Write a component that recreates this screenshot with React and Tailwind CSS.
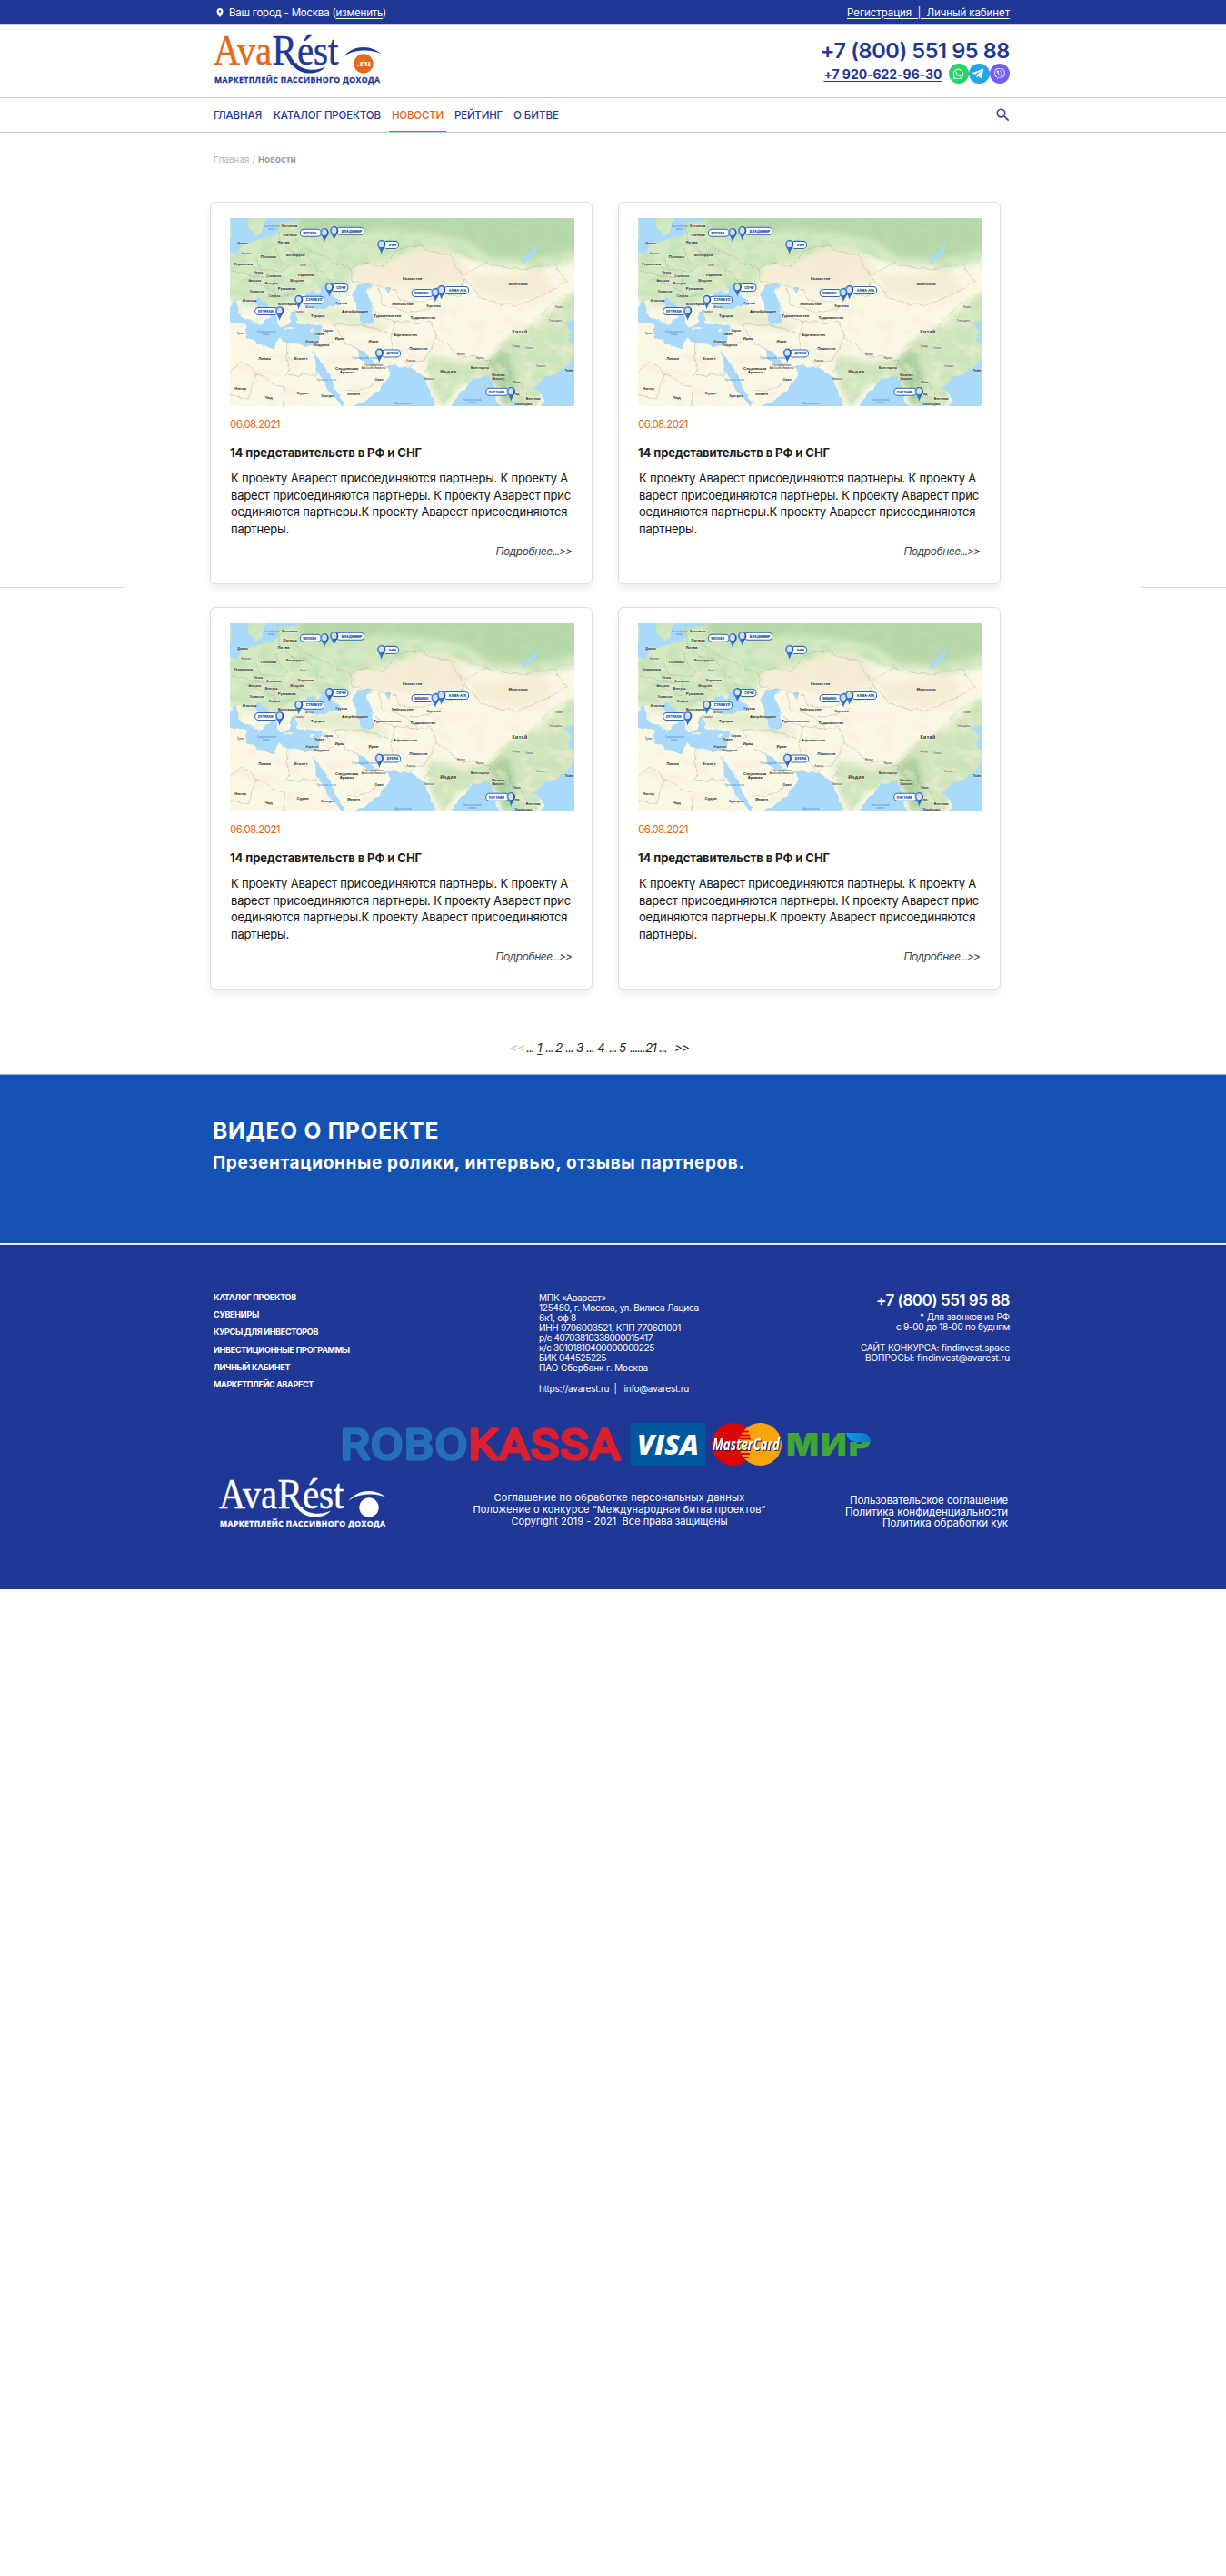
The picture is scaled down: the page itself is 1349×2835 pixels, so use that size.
import React from "react";
import { FaWhatsapp, FaTelegramPlane, FaViber } from "react-icons/fa";
import { MdSearch, MdPlace } from "react-icons/md";

const PINS = [
  [411, 139, 331, 69, "МОСКВА"],
  [443, 133, 450, 92, "ВЛАДИМИР"],
  [599, 178, 605, 51, "УФА"],
  [427, 319, 433, 56, "СОЧИ"],
  [326, 360, 333, 77, "СТАМБУЛ"],
  [263, 397, 182, 75, "ЛУТРАКИ"],
  [777, 337, 699, 71, "БИШКЕК"],
  [797, 328, 804, 83, "АЛМА-АТА"],
  [592, 536, 598, 64, "ДУБАЙ"],
  [1027, 663, 944, 76, "ПАТТАЙЯ"],
];
const PLACES = [
  [295, 121, "Эстония"], [297, 152, "Латвия"], [276, 176, "Литва"], [316, 217, "Беларусь"], [226, 222, "Польша"],
  [143, 248, "Германия"], [141, 177, "Дания", 11], [193, 274, "Чехия", 10], [243, 286, "Словакия", 10], [181, 302, "Австрия", 10],
  [236, 311, "Венгрия", 10], [349, 282, "Украина"], [320, 302, "Молдова", 10], [287, 328, "Румыния"], [188, 338, "Хорватия", 10],
  [246, 352, "Сербия", 10], [164, 366, "Италия"], [289, 380, "Болгария"], [467, 377, "Грузия", 11], [389, 418, "Турция"],
  [511, 402, "Азербайджан"], [422, 464, "Сирия", 10], [462, 491, "Ирак"], [573, 501, "Иран"], [394, 476, "Ливан", 10],
  [370, 502, "Израиль", 10], [402, 513, "Иордания", 10], [134, 474, "Тунис", 9], [213, 558, "Ливия"], [334, 557, "Египет"],
  [134, 657, "Нигер"], [227, 686, "Чад"], [339, 671, "Судан"], [422, 681, "Эритрея", 11], [507, 676, "Йемен"], [591, 627, "Оман", 10],
  [485, 590, "Саудовская"], [485, 602, "Аравия"], [573, 580, "Объединённые", 9], [573, 589, "Арабские Эмираты", 9],
  [701, 294, "Казахстан"], [668, 380, "Узбекистан"], [619, 418, "Туркменистан"], [736, 424, "Таджикистан"], [771, 386, "Киргизия", 10],
  [678, 481, "Афганистан"], [721, 525, "Пакистан"], [820, 603, "Индия", 15], [1050, 313, "Монголия"], [1056, 472, "Китай", 15],
  [862, 544, "Непал", 9], [925, 554, "Бутан", 9], [924, 588, "Бангладеш", 11], [985, 613, "Мьянма", 11], [985, 624, "(Бирма)", 11],
  [1045, 637, "Лаос", 11], [1100, 689, "Вьетнам", 11], [1068, 707, "Камбоджа", 11], [1218, 596, "Тайв", 11],
  [1047, 674, "нд", 11], [697, 565, "Карачи", 9], [755, 625, "Мумбаи", 9], [340, 249, "Киев", 9],
  [153, 210, "Берлин", 9], [1184, 388, "Пекин", 9], [1043, 515, "Чэнду", 9], [1087, 522, "Ухань", 9], [1173, 432, "Тяньцзинь", 9],
  [1126, 582, "Гонконг", 9], [364, 389, "Анкара", 9], [327, 404, "Стамбул", 9],
];
const WATERS = [
  [237, 120, "Балтийское"], [237, 129, "море"], [219, 467, "Средиземное"], [219, 476, "море"], [544, 556, "Персидский залив"],
  [419, 628, "Красное море"], [671, 706, "Аравийское"], [899, 693, "Бенгальский"], [899, 702, "залив"],
];

function WorldMap() {
  return (
    <svg viewBox="99 91 1137 620" preserveAspectRatio="none" className="block h-[207px] w-[379px]">
      <defs>
        <filter id="soft" x="-20%" y="-20%" width="140%" height="140%"><feGaussianBlur stdDeviation="11" /></filter>
        <filter id="rough" x="-5%" y="-5%" width="110%" height="110%">
          <feTurbulence type="fractalNoise" baseFrequency="0.03" numOctaves="4" seed="4" result="n" />
          <feDisplacementMap in="SourceGraphic" in2="n" scale="20" xChannelSelector="R" yChannelSelector="G" />
        </filter>
        <filter id="relief" x="0" y="0" width="100%" height="100%">
          <feTurbulence type="fractalNoise" baseFrequency="0.02 0.028" numOctaves="5" seed="9" />
          <feColorMatrix values="0 0 0 0 .5  0 0 0 0 .73  0 0 0 0 .45  0 5 0 0 -2.3" />
        </filter>
        <filter id="sand" x="0" y="0" width="100%" height="100%">
          <feTurbulence type="fractalNoise" baseFrequency="0.018 0.026" numOctaves="5" seed="21" />
          <feColorMatrix values="0 0 0 0 .91  0 0 0 0 .86  0 0 0 0 .7  0 5 0 0 -2.5" />
        </filter>
        <linearGradient id="pin" x1="0" x2="1"><stop offset="0" stopColor="#4b93e6" /><stop offset="1" stopColor="#1550a8" /></linearGradient>
        <clipPath id="north"><path d="M99 91H1236V240L1130 255L1000 240L900 230L800 180L700 190L610 240L500 250L480 330L450 350L340 330L240 380L99 350Z" /></clipPath>
        <clipPath id="southeast"><path d="M750 560L860 570L960 560L990 500L1090 440L1180 350L1236 330V620L1130 640L1110 711H1010L960 620L860 640L800 711L760 640Z" /></clipPath>
      </defs>
      <rect x="99" y="91" width="1137" height="620" fill="#fcf8e6" />
      <g filter="url(#soft)">
        <path fill="#d3e8c0" d="M80 70H1260V230L1110 260L960 245L850 215L720 190L620 235L520 250L480 340L350 340L250 395L90 365Z" />
        <path fill="#b7d8a9" d="M320 70H1260V190L1100 225L960 220L880 165L760 140L600 125L500 150L420 130L330 150Z" />
        <path fill="#f4ecd2" d="M500 260L640 230L720 190L830 200L890 270L870 310L700 320L520 310Z" />
        <path fill="#f4ecd2" d="M900 290L1130 260L1170 330L1050 370L920 340Z" />
        <path fill="#d2e6be" d="M750 540L860 560L960 560L1000 500L1110 440L1200 360L1250 330V600L1130 640L1120 711H1000L960 620L860 640L800 720L760 640Z" />
        <path fill="#add29e" d="M950 560L1010 520L1040 600L1030 711H1000Z" />
        <path fill="#e3edcb" d="M300 395L440 380L620 440L600 470L460 440L330 430Z" />
      </g>
      <rect x="99" y="240" width="1137" height="471" filter="url(#sand)" opacity=".45" />
      <g clipPath="url(#north)"><rect x="99" y="91" width="1137" height="300" filter="url(#relief)" opacity=".5" /></g>
      <g clipPath="url(#southeast)"><rect x="740" y="320" width="500" height="391" filter="url(#relief)" opacity=".4" /></g>
      <g filter="url(#rough)" fill="#a9d9fb">
        <path d="M320 80L318 100L255 104L262 130L240 152L205 158L150 172L118 206L90 200V165L108 150L95 80H158L166 128L180 150L204 140L208 112L230 80Z" />
        <path d="M344 352C352 325 375 330 388 342L402 330L395 318L425 312L440 352L470 372C455 390 400 390 345 383Z" />
        <path d="M508 335C515 305 552 300 572 318L550 335C560 360 576 380 566 400L575 430C560 450 530 445 527 425C530 390 505 370 508 335Z" />
        <path d="M90 385L128 360L134 410L165 425L200 440L236 415L170 362L190 350L215 372L248 408L262 445L296 440L302 396L322 400L318 436L345 446L402 444L392 504L352 516L296 502L256 488L244 524L196 506L152 482L150 440L90 434Z" />
        <path d="M368 528L395 560L430 612L450 660L474 700L470 711L442 684L415 642L388 588Z" />
        <path d="M517 520L544 532L562 552L596 570L578 582L548 575L524 550Z" />
        <path d="M474 725L524 704L590 665L630 607L622 590L606 576L692 578L718 596L745 620L757 652L782 725Z" />
        <path d="M832 725L838 690L872 650L902 622L958 612L978 666L990 725Z" />
        <path d="M1125 725L1136 688L1106 650L1130 622L1180 604L1220 566L1256 520V725ZM1030 700L1050 690L1062 725H1032Z" />
        <path d="M1256 420L1202 438L1226 470L1215 500L1256 520Z" />
        <path d="M1058 234L1090 206L1118 162L1108 208L1068 240Z" />
        <path d="M770 318L800 312L812 322L782 326ZM612 322L630 318L628 345ZM342 512L356 508L350 520Z" />
      </g>
      <g fill="#f2f0d6" filter="url(#rough)">
        <path d="M124 366L136 362L136 408L124 404ZM165 430L196 426L192 444ZM276 452L304 455L304 461L276 458ZM356 462L378 456L370 468Z" />
      </g>
      <g filter="url(#rough)" fill="none" stroke="#a39f90" strokeWidth="1.6" opacity=".75">
        <path d="M498 260L530 240L610 248L650 195L720 180L760 200L820 210L870 280L930 240L1000 250L1080 260L1170 240L1210 300L1120 350L1040 385L930 355L870 290" />
        <path d="M498 260L505 300L570 312L640 325L660 360L720 370L790 350L860 345L870 290" />
        <path d="M590 320L600 375L680 400L720 440L640 430L570 400M690 400L760 390L800 370M720 440L760 430L780 480L740 560L690 575M640 430L630 520L690 575M780 480L850 540L960 560L1010 510" />
        <path d="M290 500V608L390 606M186 605L278 655V711M99 600L140 560L190 605L160 690M99 675L160 690M440 440L480 500L520 520M395 510L440 498M470 660L540 655L600 620M440 445L530 440L620 470" />
        <path d="M260 100L262 160L300 200L350 210L430 300M180 220L200 260L280 265L300 240M240 270L250 350L310 340M99 265L150 275L230 290M290 300L350 310M250 190L270 240M150 290L240 330M310 165L350 190L470 250L498 260" />
        <path d="M960 560L950 600M1010 540L1030 620L1060 640L1080 680M1030 620L1000 640M740 600L755 580" />
      </g>
      <g fontFamily="Liberation Sans, sans-serif" textAnchor="middle" fill="#1b1d22" stroke="#fffdf2" strokeWidth="1" paintOrder="stroke">
        {PLACES.map(([x, y, t, s]) => (
          <text key={t + x + y} x={x} y={y} fontSize={s || 13} fontWeight={s && s < 10 ? 400 : 700} letterSpacing={s === 15 ? 1.5 : 0}>{t}</text>
        ))}
      </g>
      <g fontFamily="Liberation Sans, sans-serif" textAnchor="middle" fill="#4f8fd0" fontSize="10">
        {WATERS.map(([x, y, t]) => <text key={t + y} x={x} y={y}>{t}</text>)}
      </g>
      {PINS.map(([cx, cy, x, w, name]) => {
        const left = x < cx - 20;
        return (
          <g key={name}>
            <rect x={x} y={cy - 11} width={w} height="24" rx="12" fill="#fff" stroke="#2a68b8" strokeWidth="3" />
            <text x={left ? x + w / 2 - 3 : x + w / 2 + 5} y={cy + 5} textAnchor="middle" fontFamily="Inter, sans-serif" fontWeight="900" fontSize="11" textLength={w - 25} lengthAdjust="spacingAndGlyphs" fill="#164f9f">{name}</text>
            <path d={`M${cx - 14} ${cy}a14 15 0 0 1 28 0c0 9 -10 14 -14 32c-4 -18 -14 -23 -14 -32Z`} fill="url(#pin)" />
            <ellipse cx={cx} cy={cy - 1} rx="8.500" ry="10" fill="#dcdde0" />
          </g>
        );
      })}
    </svg>
  );
}

function Logo({ footer }) {
  const main = footer ? "#ffffff" : "#1f3795";
  const accent = footer ? "#ffffff" : "#e5691a";
  return (
    <svg viewBox="0 0 185 56" className="block h-[56px] w-[185px] shrink-0 overflow-visible">
      <g fontFamily="Liberation Serif, serif" fontSize="47">
        <text x="0" y="33" textLength="64" lengthAdjust="spacingAndGlyphs" fill={accent} stroke={accent} strokeWidth=".5">Ava</text>
        <text x="64.500" y="33" textLength="73" lengthAdjust="spacingAndGlyphs" fill={main} stroke={main} strokeWidth=".5">Rést</text>
      </g>
      <path d="M82 20C86 29 92 36 103 38.300C111 39.800 118 38 123 35.500C119 40.500 112 43 104 42.500C92 42 84 33 79 21Z" fill={main} />
      <path d="M142 25C149 17 157 14 165 14C173 14 179 17 184 21C178 18.500 172 17 164 17.500C155 18 149 20 142 25Z" fill={main} />
      <circle cx="165" cy="32" r="10.700" fill={accent} />
      {!footer && <text x="165" y="35" textAnchor="middle" fontFamily="DejaVu Serif, serif" fontWeight="700" fontSize="9.500" textLength="16" lengthAdjust="spacingAndGlyphs" fill="#fff">.ru</text>}
      <text x="1" y="53" fontFamily="Open Sans, sans-serif" fontWeight="700" fontSize="8.600" textLength="182" fill={main} stroke={main} strokeWidth=".3">МАРКЕТПЛЕЙС ПАССИВНОГО ДОХОДА</text>
    </svg>
  );
}

function Payments() {
  return (
    <svg viewBox="377 1566 583 47" className="block h-[47px] w-[583px] overflow-visible">
      <defs>
        <linearGradient id="mir" x1="0" x2="1"><stop offset="0" stopColor="#0c9fe6" /><stop offset="1" stopColor="#0a72c4" /></linearGradient>
        <clipPath id="lower"><path d="M860 1570H931V1587H960V1613H860Z" /></clipPath>
      </defs>
      <g fontFamily="Roboto, sans-serif" fontWeight="400" fontSize="45.500" strokeWidth="3.400" strokeLinejoin="round" letterSpacing="1">
        <text x="374.500" y="1606" textLength="141" lengthAdjust="spacingAndGlyphs" fill="#256fb9" stroke="#256fb9">ROBO</text>
        <text x="515.500" y="1606" textLength="168" lengthAdjust="spacingAndGlyphs" fill="#db1f2f" stroke="#db1f2f">KASSA</text>
      </g>
      <rect x="693.500" y="1566" width="83" height="47" fill="#00579c" />
      <text x="701" y="1600.500" fontFamily="Open Sans, sans-serif" fontStyle="italic" fontWeight="800" fontSize="30" textLength="68" lengthAdjust="spacingAndGlyphs" fill="#fff">VISA</text>
      <circle cx="806.500" cy="1589.500" r="23.500" fill="#dc0502" />
      <circle cx="836.500" cy="1589.500" r="23.500" fill="#fba30d" />
      <path d="M817 1575.500H824M815 1579.500H825M814 1583.500H826M814 1596H826M815 1600H825M817 1604H824" stroke="#dc0502" strokeWidth="2" />
      <text x="784" y="1595.500" className="drop-shadow-[1px_1px_0_#1d2a6b]" fontFamily="Open Sans, sans-serif" fontStyle="italic" fontWeight="700" fontSize="17" textLength="74" lengthAdjust="spacingAndGlyphs" fill="#fff">MasterCard</text>
      <g clipPath="url(#lower)">
        <text x="865" y="1602" fontFamily="Inter, sans-serif" fontWeight="900" fontSize="34.500" letterSpacing="1.500" textLength="95" lengthAdjust="spacingAndGlyphs" fill="#3fa535">МИР</text>
      </g>
      <path d="M931 1577H947C954 1577 958 1581 958 1587H943C936 1587 932 1583 931 1577Z" fill="url(#mir)" />
    </svg>
  );
}

/* one line of text */
function L({ c = "", children }) {
  return <span className={"inline-block whitespace-pre " + c}>{children}</span>;
}

function Card() {
  return (
    <article className="h-[421px] w-[421px] rounded-md border border-[#dfdfdf] bg-white pt-[17px] pl-[21px] shadow-[0_5px_8px_rgba(0,0,0,0.07)]">
      <WorldMap />
      <div className="mt-3 text-[11.500px] leading-4 text-[#e5641c]"><L c="tracking-[-0.540px]">06.08.2021</L></div>
      <h3 className="mt-[14px] text-[13px] leading-[18px] font-bold text-[#1c1c1c]"><L c="tracking-[-0.060px]">14 представительств в РФ и СНГ</L></h3>
      <p className="mt-[10px] flex flex-col items-start pl-px text-[13px] leading-[18.600px] text-[#111]">
        <L c="tracking-[-0.200px]">К проекту Аварест присоединяются партнеры. К проекту А</L>
        <L c="tracking-[-0.170px]">варест присоединяются партнеры. К проекту Аварест прис</L>
        <L c="tracking-[-0.170px]">оединяются партнеры.К проекту Аварест присоединяются</L>
        <L c="tracking-[-0.190px]">партнеры.</L>
      </p>
      <div className="mt-[8px] pr-[22px] text-right text-[12px] leading-4 text-[#444] italic"><L c="tracking-[-1px]"><span className="tracking-[-0.450px]">Подробнее</span>...&gt;&gt;</L></div>
    </article>
  );
}

const PAGES = [
  ["<<", "w-[18px] text-[#bbb] tracking-[-1px]"],
  ["...", "w-[12px] tracking-[-1px]"], ["1", "w-[9px] underline underline-offset-2"],
  ["...", "w-[11px] tracking-[-1px]"], ["2", "w-[11px]"],
  ["...", "w-[12px] tracking-[-1px]"], ["3", "w-[11px]"],
  ["...", "w-[12px] tracking-[-1px]"], ["4", "w-[13px]"],
  ["...", "w-[11px] tracking-[-1px]"], ["5", "w-[12px]"],
  ["......", "w-[17px] tracking-[-1.200px]"], ["21", "w-[15px] tracking-[-1px]"],
  ["...", "w-[17px] tracking-[-1px]"], [">>", "w-[15px] tracking-[-1px]"],
];

export default function App() {
  return (
    <div className="min-h-[2835px] overflow-hidden bg-white font-['Inter',sans-serif]">
      <div className="h-[27px] border-b border-[#c5cbe2] bg-[#1f3795] text-white">
        <div className="mx-auto flex h-[26px] w-[879px] items-center justify-between pt-px text-[11.500px] leading-4">
          <div className="flex items-center"><MdPlace className="mr-[4px] ml-px h-3 w-3" /><L c="tracking-[-0.220px]">Ваш город - Москва (<u className="underline-offset-2">изменить</u>)</L></div>
          <div className="pr-[3px]"><L c="tracking-[-0.070px] underline underline-offset-2">{"Регистрация  |  Личный кабинет"}</L></div>
        </div>
      </div>
      <header className="mx-auto flex h-[80px] w-[879px] justify-between">
        <div className="pt-[11px]"><Logo /></div>
        <div className="flex flex-col items-end pt-[15px] pr-[3px] font-semibold text-[#1f3795]">
          <div className="text-[23.500px] leading-7"><L c="tracking-[-0.400px]">+7 (800) 551 95 88</L></div>
          <div className="flex h-[22px] items-center text-[14px]">
            <L c="mr-[7px] font-bold tracking-[-0.050px] underline decoration-1 underline-offset-2">+7 920-622-96-30</L>
            <span className="flex h-[22px] w-[22.500px] items-center justify-center rounded-full bg-[#25d366]"><FaWhatsapp className="h-[13px] w-[13px] text-white" /></span>
            <span className="flex h-[22px] w-[22.500px] items-center justify-center rounded-full bg-[#27a6e5]"><FaTelegramPlane className="mr-[2px] h-[14px] w-[14px] text-white" /></span>
            <span className="flex h-[22px] w-[22.500px] items-center justify-center rounded-full bg-[#7360f2]"><FaViber className="h-[12px] w-[12px] text-white" /></span>
          </div>
        </div>
      </header>
      <nav className="h-[39px] border-y border-[#c8c8c8]">
        <div className="mx-auto flex h-full w-[879px] text-[11.500px] leading-[38px] font-medium text-[#1f3795]">
          <L c="mr-[13px] h-[37px] tracking-[-0.080px]">ГЛАВНАЯ</L>
          <L c="mr-[9px] h-[37px] tracking-[-0.130px]">КАТАЛОГ ПРОЕКТОВ</L>
          <span className="mr-[9px] h-[37px] border-b border-[#e8521f] px-[3px] text-[#e5641c]"><L c="h-[36px] tracking-[-0.200px]">НОВОСТИ</L></span>
          <L c="mr-[12px] h-[37px] tracking-[-0.210px]">РЕЙТИНГ</L>
          <L c="h-[37px]">О БИТВЕ</L>
          <MdSearch className="mt-[9px] mr-px ml-auto h-[19px] w-[19px] text-[#4a3a8c]" />
        </div>
      </nav>
      <div className="mx-auto w-[879px] pt-[20px] text-[9.500px] leading-5 text-[#b4b4b4]">
        <L c="tracking-[0.230px]">{"Главная / "}</L><L c="font-bold tracking-[0.190px] text-[#999]">Новости</L>
      </div>
      <main className="mt-[36px] grid grid-cols-[231px_870px_248px]">
        <div className="mt-[424px] h-px w-[138px] bg-[#d8d8e2]" />
        <div className="grid grid-cols-2 gap-x-[28px] gap-y-[25px]">
          <Card /><Card /><Card /><Card />
        </div>
        <div className="mt-[424px] ml-auto h-px w-[95px] bg-[#d8d8e2]" />
      </main>
      <div className="mt-[54px] flex pl-[561px] text-[13.500px] leading-5 text-[#222] italic">
        {PAGES.map(([t, c], i) => <span key={i} className={"inline-block whitespace-nowrap " + c}>{t}</span>)}
      </div>
      <section className="mt-[19px] h-[188px] border-t border-b-2 border-t-[#9db2d6] border-b-[#e8eefa] bg-[#1452b3] font-bold text-white">
        <div className="mx-auto w-[879px] pt-[47px]">
          <h2 className="-ml-px text-[24.500px] leading-7"><L c="tracking-[0.800px]">ВИДЕО О ПРОЕКТЕ</L></h2>
          <p className="mt-[10px] -ml-px text-[19px] leading-6"><L c="tracking-[0.650px]">Презентационные ролики, интервью, отзывы партнеров.</L></p>
        </div>
      </section>
      <footer className="h-[379px] bg-[#1f3795] text-white">
        <div className="mx-auto w-[879px]">
          <div className="grid h-[179px] grid-cols-[358px_260px_1fr] border-b border-[#b5b09a]">
            <div className="flex flex-col items-start pt-[48px] text-[9px] leading-[19.200px] font-bold">
              <L c="tracking-[-0.280px]">КАТАЛОГ ПРОЕКТОВ</L>
              <L c="tracking-[-0.250px]">СУВЕНИРЫ</L>
              <L c="tracking-[-0.320px]">КУРСЫ ДЛЯ ИНВЕСТОРОВ</L>
              <L c="tracking-[-0.260px]">ИНВЕСТИЦИОННЫЕ ПРОГРАММЫ</L>
              <L c="tracking-[-0.280px]">ЛИЧНЫЙ КАБИНЕТ</L>
              <L c="tracking-[-0.360px]">МАРКЕТПЛЕЙС АВАРЕСТ</L>
            </div>
            <div className="flex flex-col items-start pt-[52.500px] text-[10px] leading-[11.100px]">
              <L c="tracking-[-0.290px]">МПК «Аварест»</L>
              <L c="tracking-[-0.240px]">125480, г. Москва, ул. Вилиса Лациса</L>
              <L c="tracking-[-0.250px]">6к1, оф 8</L>
              <L c="tracking-[-0.320px]">ИНН 9706003521, КПП 770601001</L>
              <L c="tracking-[-0.430px]">р/с 40703810338000015417</L>
              <L c="tracking-[-0.390px]">к/с 30101810400000000225</L>
              <L c="tracking-[-0.410px]">БИК 044525225</L>
              <L c="tracking-[-0.100px]">ПАО Сбербанк г. Москва</L>
              <L c="mt-3 tracking-[-0.200px]">{"https://avarest.ru  |   info@avarest.ru"}</L>
            </div>
            <div className="flex flex-col items-end pt-[51px] pr-[3px] text-[10px] leading-[11.100px]">
              <div className="text-[17px] leading-5 font-semibold"><L c="tracking-[-0.490px]">+7 (800) 551 95 88</L></div>
              <L c="mt-[3px] tracking-[-0.090px]">* Для звонков из РФ</L>
              <L c="tracking-[-0.250px]">с 9-00 до 18-00 по будням</L>
              <L c="mt-3 tracking-[-0.160px]">САЙТ КОНКУРСА: findinvest.space</L>
              <L c="tracking-[-0.050px]">ВОПРОСЫ: findinvest@avarest.ru</L>
            </div>
          </div>
          <div className="pt-[17px] pl-[142px]"><Payments /></div>
          <div className="mt-[14px] flex h-[56px]">
            <div className="w-[285px] pl-[6px]"><Logo footer /></div>
            <div className="flex w-[323px] flex-col items-center pt-[15px] text-[11px] leading-[13px]">
              <L c="tracking-[0.200px]">Соглашение по обработке персональных данных</L>
              <L c="tracking-[0.150px]">Положение о конкурсе “Международная битва проектов”</L>
              <L c="tracking-[0.030px]">{"Copyright 2019 - 2021  Все права защищены"}</L>
            </div>
            <div className="ml-auto flex flex-col items-end pt-[18px] pr-[5px] text-[11.500px] leading-[12.500px]">
              <L c="tracking-[-0.090px]">Пользовательское соглашение</L>
              <L c="tracking-[0.040px]">Политика конфиденциальности</L>
              <L c="tracking-[-0.040px]">Политика обработки кук</L>
            </div>
          </div>
        </div>
      </footer>
    </div>
  );
}
